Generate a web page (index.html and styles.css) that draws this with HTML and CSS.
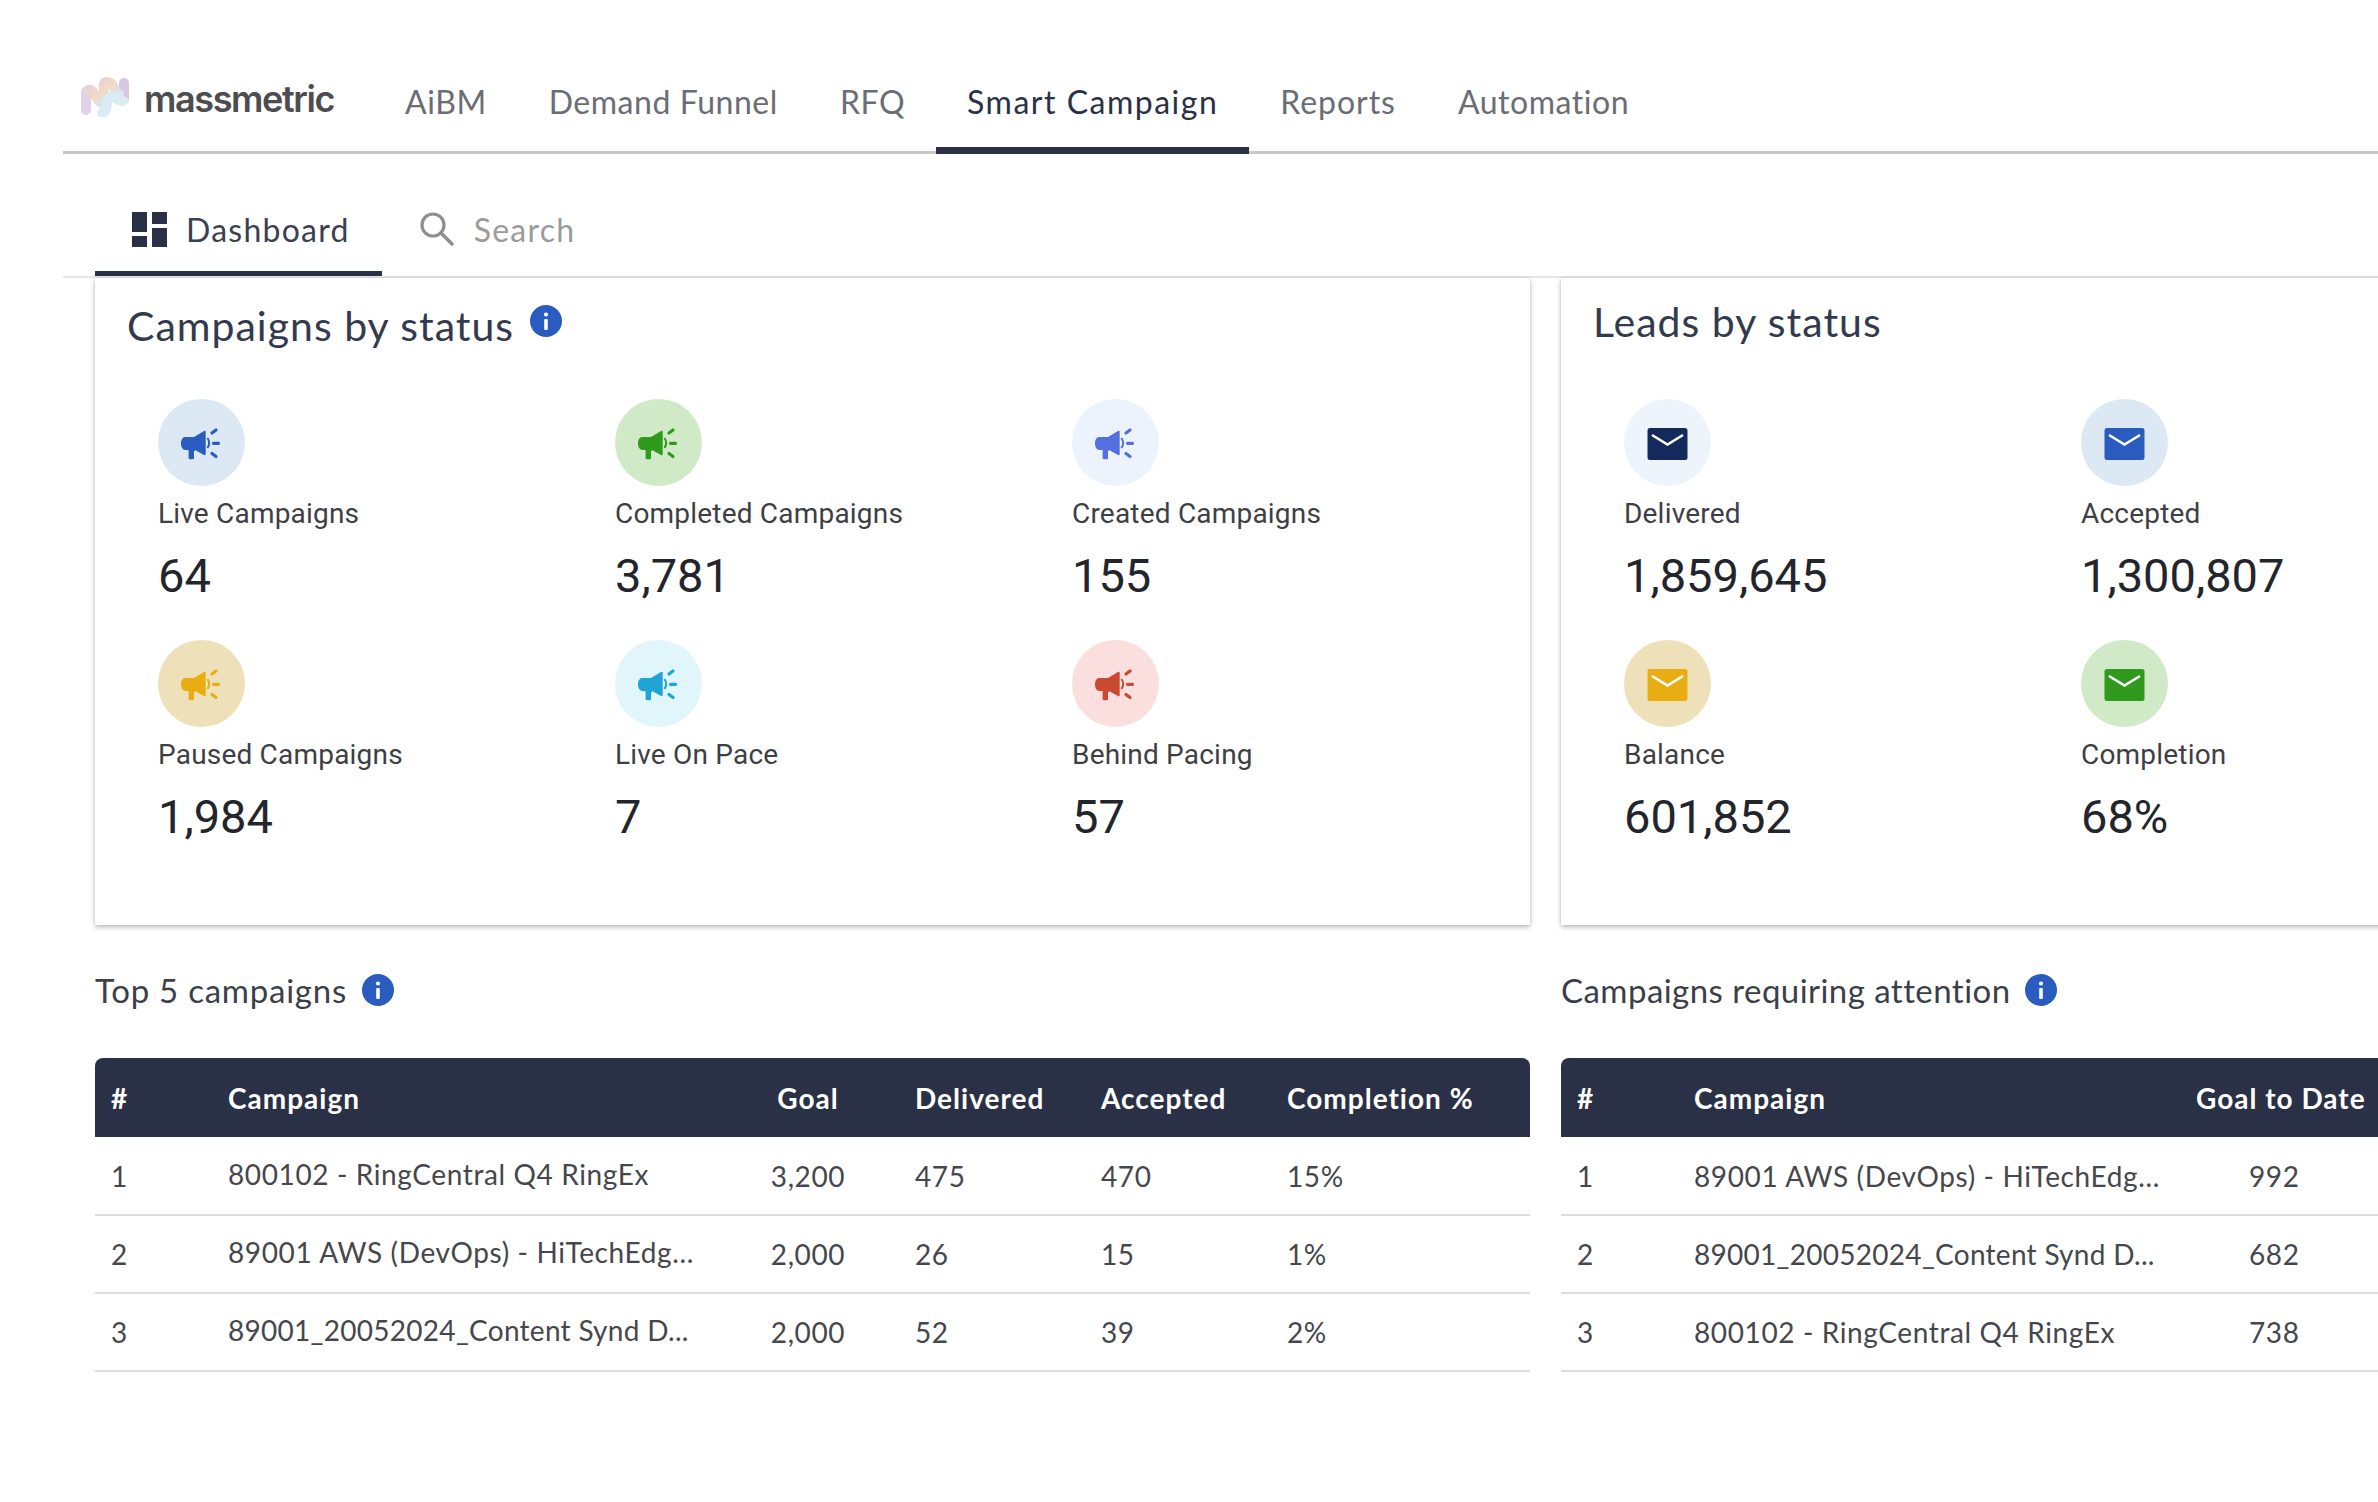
FILE: index.html
```html
<!DOCTYPE html>
<html lang="en">
<head>
<meta charset="utf-8">
<title>Smart Campaign Dashboard</title>
<link rel="stylesheet" href="styles.css">
</head>
<body>
<svg class="defs" width="0" height="0" aria-hidden="true">
  <symbol id="horn" viewBox="0 0 87 87">
    <path fill="currentColor" d="M26 38h9l10-6c1-.5 1.700 0 1.700 1v22c0 1-.7 1.500-1.700 1l-9-5v1l-1 0v7c0 .8-.5 1.200-1.200 1.200h-3c-.8 0-1.200-.4-1.200-1.200v-8h-3c-3 0-4.600-3-4.600-6.500s1.500-6.500 4-6.500z" transform="translate(1 0)"/>
    <path fill="none" stroke="currentColor" stroke-width="2" d="M49.500 39c2 3 2 7 0 10"/>
    <path fill="none" stroke="currentColor" stroke-width="3.200" stroke-linecap="round" d="M54 34l4-3M55.500 44.300h5M54 54.500l4 3"/>
  </symbol>
  <symbol id="mail" viewBox="0 0 87 87">
    <rect x="23.500" y="29" width="40" height="32" rx="2.500" fill="currentColor"/>
    <path fill="none" stroke="#fff" stroke-width="2.600" d="M28 36l15.500 9.500L59 36"/>
  </symbol>
  <symbol id="info" viewBox="0 0 32 32">
    <circle cx="16" cy="16" r="16" fill="#2a5cbf"/>
    <rect x="14.200" y="14" width="3.600" height="11" rx="1" fill="#fff"/>
    <circle cx="16" cy="9.500" r="2.100" fill="#fff"/>
  </symbol>
</svg>

<header class="topbar">
  <div class="brand">
    <svg class="brand-mark" width="50" height="40" viewBox="0 0 50 40" aria-hidden="true">
      <defs>
        <linearGradient id="wave" x1="0" y1="0" x2="1" y2="1">
          <stop offset="0" stop-color="#e3cfe6"/>
          <stop offset=".45" stop-color="#f3d9c0"/>
          <stop offset=".75" stop-color="#d6e5f2"/>
          <stop offset="1" stop-color="#e3f1f6"/>
        </linearGradient>
      </defs>
      <path d="M6 33V15" fill="none" stroke="#e0d0e8" stroke-width="10" stroke-linecap="round"/>
      <path d="M44 22V6" fill="none" stroke="#d8c6e3" stroke-width="10" stroke-linecap="round"/>
      <path d="M8 13c6-3 9 14 15 13 5-1-4-21 4-21 7 0 7 10 12 12" fill="none" stroke="url(#wave)" stroke-width="10" stroke-linecap="round"/>
      <path d="M22 36c7 0 2-14 9-16 5-1 8 6 12 4" fill="none" stroke="#dbebf4" stroke-width="10" stroke-linecap="round"/>
    </svg>
    <span class="brand-name">massmetric</span>
  </div>
  <nav class="mainnav">
    <a class="mainnav-item">AiBM</a>
    <a class="mainnav-item">Demand Funnel</a>
    <a class="mainnav-item">RFQ</a>
    <a class="mainnav-item is-active">Smart Campaign</a>
    <a class="mainnav-item mainnav-wide">Reports</a>
    <a class="mainnav-item">Automation</a>
  </nav>
</header>

<div class="subbar">
  <a class="subtab is-active">
    <svg width="35" height="35" viewBox="0 0 35 35" aria-hidden="true">
      <rect x="0" y="0" width="15" height="20" fill="#2a3146"/>
      <rect x="20" y="0" width="15" height="12" fill="#2a3146"/>
      <rect x="0" y="24" width="15" height="11" fill="#2a3146"/>
      <rect x="20" y="16" width="15" height="19" fill="#2a3146"/>
    </svg>
    <span>Dashboard</span>
  </a>
  <a class="subtab is-muted">
    <svg width="36" height="36" viewBox="0 0 36 36" aria-hidden="true">
      <circle cx="14" cy="14" r="11" fill="none" stroke="#8f8f8f" stroke-width="3.200"/>
      <path d="M22 22l11 11" stroke="#8f8f8f" stroke-width="3.600" stroke-linecap="round"/>
    </svg>
    <span>Search</span>
  </a>
</div>

<main class="content">
  <div class="cols">
    <section class="col">
      <div class="card">
        <h2 class="card-title card-title-main">Campaigns by status <svg class="info info-raised" aria-hidden="true"><use href="#info"/></svg></h2>
        <div class="stats">
          <div class="stat"><svg class="dot bg-blue"><use href="#horn"/></svg><div class="stat-label">Live Campaigns</div><div class="stat-value">64</div></div>
          <div class="stat"><svg class="dot bg-green"><use href="#horn"/></svg><div class="stat-label">Completed Campaigns</div><div class="stat-value">3,781</div></div>
          <div class="stat"><svg class="dot bg-indigo"><use href="#horn"/></svg><div class="stat-label">Created Campaigns</div><div class="stat-value">155</div></div>
          <div class="stat"><svg class="dot bg-yellow"><use href="#horn"/></svg><div class="stat-label">Paused Campaigns</div><div class="stat-value">1,984</div></div>
          <div class="stat"><svg class="dot bg-cyan"><use href="#horn"/></svg><div class="stat-label">Live On Pace</div><div class="stat-value">7</div></div>
          <div class="stat"><svg class="dot bg-red"><use href="#horn"/></svg><div class="stat-label">Behind Pacing</div><div class="stat-value">57</div></div>
        </div>
      </div>
      <h3 class="section-title section-title-wide">Top 5 campaigns <svg class="info" aria-hidden="true"><use href="#info"/></svg></h3>
      <table class="grid grid-top">
        <thead>
          <tr><th class="c-idx">#</th><th class="c-name">Campaign</th><th class="c-goal">Goal</th><th class="c-num">Delivered</th><th class="c-num">Accepted</th><th class="c-num c-last">Completion %</th></tr>
        </thead>
        <tbody>
          <tr><td class="c-idx">1</td><td class="c-name">800102 - RingCentral Q4 RingEx</td><td class="c-goal">3,200</td><td class="c-num">475</td><td class="c-num">470</td><td class="c-num c-last">15%</td></tr>
          <tr><td class="c-idx">2</td><td class="c-name">89001 AWS (DevOps) - HiTechEdg...</td><td class="c-goal">2,000</td><td class="c-num">26</td><td class="c-num">15</td><td class="c-num c-last">1%</td></tr>
          <tr><td class="c-idx">3</td><td class="c-name c-tight">89001_20052024_Content Synd D...</td><td class="c-goal">2,000</td><td class="c-num">52</td><td class="c-num">39</td><td class="c-num c-last">2%</td></tr>
        </tbody>
      </table>
    </section>

    <section class="col">
      <div class="card">
        <h2 class="card-title">Leads by status</h2>
        <div class="stats">
          <div class="stat"><svg class="dot bg-navy"><use href="#mail"/></svg><div class="stat-label">Delivered</div><div class="stat-value">1,859,645</div></div>
          <div class="stat"><svg class="dot bg-blue"><use href="#mail"/></svg><div class="stat-label">Accepted</div><div class="stat-value">1,300,807</div></div>
          <div class="stat stat-gap"></div>
          <div class="stat"><svg class="dot bg-yellow"><use href="#mail"/></svg><div class="stat-label">Balance</div><div class="stat-value">601,852</div></div>
          <div class="stat"><svg class="dot bg-green"><use href="#mail"/></svg><div class="stat-label">Completion</div><div class="stat-value">68%</div></div>
        </div>
      </div>
      <h3 class="section-title">Campaigns requiring attention <svg class="info" aria-hidden="true"><use href="#info"/></svg></h3>
      <table class="grid grid-attn">
        <thead>
          <tr><th class="c-idx">#</th><th class="c-name">Campaign</th><th class="c-date">Goal to Date</th></tr>
        </thead>
        <tbody>
          <tr><td class="c-idx">1</td><td class="c-name">89001 AWS (DevOps) - HiTechEdg...</td><td class="c-date">992</td></tr>
          <tr><td class="c-idx">2</td><td class="c-name c-tight">89001_20052024_Content Synd D...</td><td class="c-date">682</td></tr>
          <tr><td class="c-idx">3</td><td class="c-name">800102 - RingCentral Q4 RingEx</td><td class="c-date">738</td></tr>
        </tbody>
      </table>
    </section>
  </div>
</main>
</body>
</html>
```
FILE: styles.css
```css
* { box-sizing: border-box; }
html, body { margin: 0; height: 100%; }
body {
  background: #fff;
  color: #3b3f4a;
  font-family: "Lato", "Liberation Sans", sans-serif;
  overflow: hidden;
}
.defs { display: block; height: 0; }

.topbar {
  display: flex;
  align-items: stretch;
  margin-left: 63px;
  padding-top: 60px;
  height: 154px;
  border-bottom: 3px solid #c9c9c9;
}
.brand {
  display: flex;
  align-items: flex-start;
  gap: 14px;
  width: 311px;
  padding: 17px 0 0 17px;
}
.brand-name {
  font-family: "Inter", sans-serif;
  font-weight: 600;
  font-size: 36px;
  line-height: 44px;
  letter-spacing: -1.4px;
  color: #4d4d50;
}
.mainnav { display: flex; }
.mainnav-item {
  display: block;
  height: 94px;
  padding: 24px 31px 0;
  font-size: 32px;
  line-height: 36px;
  letter-spacing: .55px;
  color: #6a6d76;
  border-bottom: 7px solid transparent;
}
.mainnav-wide { letter-spacing: .95px; }
.mainnav-item.is-active { color: #2a3146; border-bottom-color: #2a3146; letter-spacing: 1.5px; }

.subbar {
  display: flex;
  margin-left: 63px;
  padding-left: 32px;
  height: 124px;
  border-bottom: 2px solid #e6e6e6;
}
.subtab {
  display: flex;
  align-items: center;
  gap: 19px;
  height: 122px;
  padding: 33px 32px 0 37px;
  font-size: 32px;
  letter-spacing: 1.25px;
  border-bottom: 5px solid transparent;
}
.subtab.is-active { color: #3a4052; border-bottom-color: #2a3146; }
.subtab.is-muted { color: #9b9b9b; }

.content { padding-left: 95px; }
.cols { display: flex; gap: 31px; width: 2900px; }
.col { flex: none; width: 1435px; }

.card {
  height: 647px;
  padding: 0 32px;
  background: #fff;
  box-shadow: 0 2px 5px rgba(0, 0, 0, .28), 0 0 2px rgba(0, 0, 0, .08);
}
.card-title {
  margin: 0;
  padding-top: 21px;
  height: 121px;
  font-size: 41px;
  line-height: 46px;
  font-weight: 400;
  letter-spacing: 1px;
  color: #333a4d;
}
.card-title-main { padding-top: 25px; }

.info { width: 32px; height: 32px; vertical-align: 0; margin-left: 4px; }
.info-raised { vertical-align: 4px; }

.stats {
  display: grid;
  grid-template-columns: repeat(3, 457px);
  grid-auto-rows: 241px;
  padding-left: 31px;
}
.stat { min-width: 0; }
.dot {
  display: block;
  width: 87px;
  height: 87px;
  border-radius: 50%;
}
.stat-label {
  margin-top: 10px;
  font-family: "Roboto", sans-serif;
  font-size: 28px;
  line-height: 36px;
  letter-spacing: .2px;
  color: #3d3f45;
}
.stat-value {
  margin-top: 16px;
  font-family: "Roboto", sans-serif;
  font-size: 47px;
  line-height: 56px;
  color: #22252b;
}

.bg-blue { background: #dce9f4; color: #2a5cbf; }
.bg-green { background: #d0e9c6; color: #2f9a1c; }
.bg-indigo { background: #edf3fc; color: #5470e0; }
.bg-yellow { background: #eee0b8; color: #e8ad12; }
.bg-cyan { background: #e0f6fb; color: #1ea5d6; }
.bg-red { background: #fbdfdf; color: #c94a30; }
.bg-navy { background: #eef4fc; color: #142a5c; }

.section-title {
  margin: 0;
  padding-top: 45px;
  height: 133px;
  font-size: 33px;
  line-height: 40px;
  font-weight: 400;
  letter-spacing: .45px;
  color: #3b3f4a;
}
.section-title-wide { letter-spacing: .75px; }
.section-title .info { margin-left: 6px; vertical-align: -3px; }

.grid {
  width: 1435px;
  border-collapse: separate;
  border-spacing: 0;
  table-layout: fixed;
  font-size: 28px;
}
.grid th {
  height: 79px;
  padding: 0;
  background: #2a3146;
  color: #fff;
  font-weight: 700;
  text-align: left;
  letter-spacing: 1px;
}
.grid th:first-child { border-top-left-radius: 8px; }
.grid th:last-child { border-top-right-radius: 8px; }
.grid td {
  height: 78px;
  padding: 0;
  border-bottom: 2px solid #dcdcdc;
  color: #45474d;
  letter-spacing: .62px;
}
.grid tbody tr:first-child td { height: 79px; }
.grid td.c-tight { letter-spacing: .28px; }
.c-idx { width: 133px; padding-left: 16px !important; }
.grid-top .c-name { width: 518px; }
.grid-top td.c-name { padding-bottom: 4px; }
.c-goal { width: 124px; text-align: center !important; }
.c-num { width: 186px; padding-left: 45px !important; }
.c-num.c-last { width: auto; }
.grid-attn .c-name { width: 502px; }
.grid-attn th.c-date { padding-left: 0; }
.grid-attn td.c-date { padding-left: 53px; }
.grid-attn .c-date { width: auto; }
```
